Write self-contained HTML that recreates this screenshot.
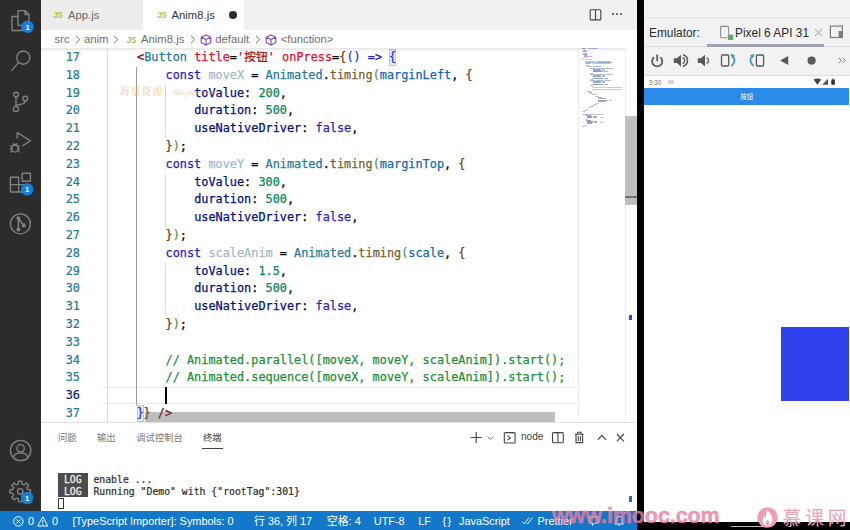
<!DOCTYPE html>
<html lang="zh">
<head>
<meta charset="utf-8">
<title>Anim8.js</title>
<style>
*{box-sizing:border-box;margin:0;padding:0}
html,body{width:850px;height:530px;overflow:hidden;background:#fff}
body{position:relative;font-family:"Liberation Sans","Noto Sans CJK SC",sans-serif;color:#333}
.abs{position:absolute}
#act{left:0;top:0;width:41px;height:511px;background:#2c2c2c}
#tabs{left:41px;top:0;width:596px;height:29.5px;background:#f1f1f1}
.tab{position:absolute;top:0;height:29.5px;font-size:11.3px;line-height:30px;color:#6a6a6a;white-space:nowrap}
.js{color:#b3bd3c;font-size:8.3px;font-weight:bold;letter-spacing:-0.4px;position:absolute;top:0}
#bc{left:41px;top:29.5px;width:596px;height:18.5px;background:#fff;font-size:11.3px;color:#6e6e6e;white-space:nowrap}
#bc span{position:absolute;top:-0.5px;line-height:20px}
.chev{position:absolute;top:5.8px;fill:none;stroke:#6e6e6e;stroke-width:1}
.cube{position:absolute;top:4px;fill:none;stroke:#7b4bc0;stroke-width:1.1;stroke-linejoin:round}
#ed{left:41px;top:48px;width:596px;height:374px;background:#fff;overflow:hidden}
.ln{position:absolute;-webkit-text-stroke:0.2px;left:0;width:39px;text-align:right;color:#237893;font:11.865px/17.8px "DejaVu Sans Mono","Liberation Mono",monospace}
.cl{position:absolute;white-space:pre;color:#000;-webkit-text-stroke:0.25px;font:11.865px/17.8px "DejaVu Sans Mono","Liberation Mono","Noto Sans CJK SC",monospace}
.k{color:#2a1cc8}.t{color:#2a7a92}.a{color:#dc1030}.s{color:#a31515}.f{color:#775f30}.v{color:#001080}.c{color:#1467b4}
.n{color:#098658}.m{color:#1f8c35}.p{color:#800000}.b1{color:#1a34e0}.b2{color:#4a9c4a}.b3{color:#7b3814}.u{color:#a3b8cc}
.bm{display:inline-block;height:17.6px;line-height:17.8px;vertical-align:top;background:#e3ebf5;box-shadow:inset 0 0 0 1px #c2c6cc;margin:0 -0.3px}
#mm i{position:absolute;display:block}
.cur{color:#0b216f}
.g{position:absolute;width:1px;background:#dcdcdc}
#panel{left:41px;top:422px;width:596px;height:89px;background:#fff;box-shadow:inset 0 1px 0 #e2e2e2}
.pt{position:absolute;top:8.6px;font-size:9.3px;color:#777;line-height:14px;white-space:nowrap}
.tm{position:absolute;left:17px;white-space:pre;color:#2c2c2c;-webkit-text-stroke:0.2px;font:9.8px/12.2px "DejaVu Sans Mono","Liberation Mono",monospace}
.log{color:#ececec;-webkit-text-stroke:0.3px}
#status{left:0;top:510.7px;width:637px;height:19.3px;background:#1378c9;color:#fff;font-size:10.9px;white-space:nowrap}
#status span{position:absolute;top:1.7px;line-height:19px}
#div{left:637px;top:0;width:7px;height:530px;background:#000}
#emu{left:644px;top:0;width:206px;height:530px;background:#fff}
.et{top:25px;font-size:11.9px;line-height:16px;color:#2b2b2b;white-space:nowrap}
</style>
</head>
<body>
<div id="act" class="abs">
<svg width="41" height="511" viewBox="0 0 41 511" fill="none" stroke="#828282" stroke-width="1.35" stroke-linecap="round" stroke-linejoin="round">
  <!-- files -->
  <path d="M18 10.6 H25 L29 14.6 V25.4 H18 Z M25 10.6 V14.6 H29"/>
  <path d="M17.5 16.5 H12 V30.5 H22.5 V26"/>
  <!-- search -->
  <circle cx="23.3" cy="57.6" r="6.6"/><path d="M18.4 62.6 L11.6 70.6"/>
  <!-- scm -->
  <circle cx="16.1" cy="94.6" r="2.4"/><circle cx="25.2" cy="98.6" r="2.4"/><circle cx="15.9" cy="108.9" r="2.6"/>
  <path d="M16 97.2 V106.2 M25.2 101.2 C25 104.5 21 104.5 16.2 105"/>
  <!-- debug -->
  <path d="M17.2 138 V132.6 L30.4 140.8 L23 145.6"/>
  <ellipse cx="14.9" cy="148.2" rx="3" ry="3.9"/><path d="M12.6 145.4 H17.2 M10.6 146 L12 147 M10.4 149 H11.8 M10.6 152 L12 151 M19.2 146 L17.8 147 M19.4 149 H18 M19.2 152 L17.8 151 M13.2 143.6 L14 144.6 M16.6 143.6 L15.8 144.6"/>
  <!-- extensions -->
  <path d="M10.4 177.2 H18.6 V192 H10.4 Z M10.4 184.6 H18.6 M18.6 184.6 H26 V192 H18.6"/>
  <rect x="22.2" y="173.2" width="8.2" height="8"/>
  <!-- gitlens -->
  <circle cx="20.4" cy="223.8" r="10"/>
  <path d="M18.4 218.6 V229.4 M18.6 218.8 L23.4 225.2" stroke-width="1.5"/>
  <circle cx="18.4" cy="218.2" r="1.3" fill="#868686"/><circle cx="18.4" cy="229.6" r="1.3" fill="#868686"/><circle cx="23.8" cy="225.4" r="1.4" fill="#868686"/>
  <!-- account -->
  <circle cx="20.6" cy="450.5" r="10.2"/><circle cx="20.6" cy="448.3" r="3.7"/>
  <path d="M13.4 457.3 C15 451.3 26.2 451.3 27.8 457.3"/>
  <!-- gear -->
  <path d="M30.45 489.61 L30.45 493.19 L27.59 493.17 L26.68 495.37 L28.71 497.38 L26.18 499.91 L24.17 497.88 L21.97 498.79 L21.99 501.65 L18.41 501.65 L18.43 498.79 L16.23 497.88 L14.22 499.91 L11.69 497.38 L13.72 495.37 L12.81 493.17 L9.95 493.19 L9.95 489.61 L12.81 489.63 L13.72 487.43 L11.69 485.42 L14.22 482.89 L16.23 484.92 L18.43 484.01 L18.41 481.15 L21.99 481.15 L21.97 484.01 L24.17 484.92 L26.18 482.89 L28.71 485.42 L26.68 487.43 L27.59 489.63 Z"/><circle cx="20.2" cy="491.4" r="2.7"/>
  <!-- badges -->
  <g stroke="none">
  <circle cx="27.6" cy="26.8" r="6.2" fill="#1581d6"/><circle cx="27.2" cy="189.4" r="6.2" fill="#1581d6"/><circle cx="27.2" cy="498" r="6.2" fill="#1581d6"/>
  </g>
  <g stroke="none" fill="#fff" style="font:bold 7.6px 'Liberation Sans',sans-serif" text-anchor="middle">
  <text x="27.5" y="29.6">1</text><text x="27.1" y="192.2">1</text><text x="27.1" y="500.8">1</text>
  </g>
</svg>
</div>
<div id="tabs" class="abs">
  <div class="tab" style="left:0;width:101.5px;background:#ececec"><span class="js" style="left:12px">JS</span><span style="position:absolute;left:27px">App.js</span></div>
  <div class="tab" style="left:101.5px;width:101px;background:#fff;color:#333"><span class="js" style="left:14.5px">JS</span><span style="position:absolute;left:29px">Anim8.js</span><span style="position:absolute;left:86.5px;top:11px;width:7.5px;height:7.5px;border-radius:50%;background:#2e2e2e"></span></div>
  <svg class="abs" style="left:548px;top:8px" width="14" height="14" viewBox="0 0 14 14"><rect x="1.2" y="1.7" width="10.6" height="10.2" rx="1" fill="none" stroke="#444" stroke-width="1.1"/><line x1="6.5" y1="1.7" x2="6.5" y2="12" stroke="#444" stroke-width="1.1"/></svg>
  <span class="abs" style="left:571px;top:13.4px;width:2px;height:2px;border-radius:50%;background:#444;box-shadow:4px 0 0 #444,8px 0 0 #444"></span>
</div>
<div id="bc" class="abs">
  <span style="left:13.5px">src</span><svg class="chev" style="left:33.5px" width="6" height="9" viewBox="0 0 6 9"><path d="M1 0.8 L4.8 4.5 L1 8.2"/></svg><span style="left:43px">anim</span><svg class="chev" style="left:71.5px" width="6" height="9" viewBox="0 0 6 9"><path d="M1 0.8 L4.8 4.5 L1 8.2"/></svg>
  <span class="js" style="left:85.5px;top:0px">JS</span><span style="left:100px">Anim8.js</span><svg class="chev" style="left:148.5px" width="6" height="9" viewBox="0 0 6 9"><path d="M1 0.8 L4.8 4.5 L1 8.2"/></svg>
  <svg class="cube" style="left:158.5px" width="12" height="12" viewBox="0 0 12 12"><path d="M6 0.9 L10.8 3.2 V8.6 L6 11.1 L1.2 8.6 V3.2 Z M1.2 3.2 L6 5.6 L10.8 3.2 M6 5.6 V11.1"/></svg>
  <span style="left:174.3px">default</span><svg class="chev" style="left:214px" width="6" height="9" viewBox="0 0 6 9"><path d="M1 0.8 L4.8 4.5 L1 8.2"/></svg>
  <svg class="cube" style="left:224px" width="12" height="12" viewBox="0 0 12 12"><path d="M6 0.9 L10.8 3.2 V8.6 L6 11.1 L1.2 8.6 V3.2 Z M1.2 3.2 L6 5.6 L10.8 3.2 M6 5.6 V11.1"/></svg>
  <span style="left:239.7px">&lt;function&gt;</span>
</div>
<div id="ed" class="abs">
<div class="abs" style="left:61.5px;top:338.50px;width:475.5px;height:17.40px;border-top:1px solid #ebebeb;border-bottom:1px solid #ebebeb"></div>
<div class="g" style="left:66.2px;top:0.90px;height:373.80px"></div>
<div class="g" style="left:94.9px;top:18.70px;height:338.20px;background:#9a9a9a"></div>
<div class="g" style="left:124.3px;top:36.50px;height:53.40px"></div>
<div class="g" style="left:124.3px;top:125.50px;height:53.40px"></div>
<div class="g" style="left:124.3px;top:214.50px;height:53.40px"></div>
<div class="ln" style="top:0.90px">17</div>
<div class="cl" style="left:96.00px;top:0.90px"><span class="p">&lt;</span><span class="t">Button</span> <span class="a">title</span>=<span class="s">'按钮'</span> <span class="a">onPress</span>=<span class="b3">{</span><span class="b1">()</span> <span class="k">=&gt;</span> <span class="b1 bm">{</span></div>
<div class="ln" style="top:18.70px">18</div>
<div class="cl" style="left:124.57px;top:18.70px"><span class="k">const</span> <span class="u">moveX</span> = <span class="t">Animated</span>.<span class="f">timing</span><span class="b2">(</span><span class="c">marginLeft</span>, <span class="b3">{</span></div>
<div class="ln" style="top:36.50px">19</div>
<div class="cl" style="left:153.14px;top:36.50px"><span class="v">toValue</span>: <span class="n">200</span>,</div>
<div class="ln" style="top:54.30px">20</div>
<div class="cl" style="left:153.14px;top:54.30px"><span class="v">duration</span>: <span class="n">500</span>,</div>
<div class="ln" style="top:72.10px">21</div>
<div class="cl" style="left:153.14px;top:72.10px"><span class="v">useNativeDriver</span>: <span class="k">false</span>,</div>
<div class="ln" style="top:89.90px">22</div>
<div class="cl" style="left:124.57px;top:89.90px"><span class="b3">}</span><span class="b2">)</span>;</div>
<div class="ln" style="top:107.70px">23</div>
<div class="cl" style="left:124.57px;top:107.70px"><span class="k">const</span> <span class="u">moveY</span> = <span class="t">Animated</span>.<span class="f">timing</span><span class="b2">(</span><span class="c">marginTop</span>, <span class="b3">{</span></div>
<div class="ln" style="top:125.50px">24</div>
<div class="cl" style="left:153.14px;top:125.50px"><span class="v">toValue</span>: <span class="n">300</span>,</div>
<div class="ln" style="top:143.30px">25</div>
<div class="cl" style="left:153.14px;top:143.30px"><span class="v">duration</span>: <span class="n">500</span>,</div>
<div class="ln" style="top:161.10px">26</div>
<div class="cl" style="left:153.14px;top:161.10px"><span class="v">useNativeDriver</span>: <span class="k">false</span>,</div>
<div class="ln" style="top:178.90px">27</div>
<div class="cl" style="left:124.57px;top:178.90px"><span class="b3">}</span><span class="b2">)</span>;</div>
<div class="ln" style="top:196.70px">28</div>
<div class="cl" style="left:124.57px;top:196.70px"><span class="k">const</span> <span class="u">scaleAnim</span> = <span class="t">Animated</span>.<span class="f">timing</span><span class="b2">(</span><span class="c">scale</span>, <span class="b3">{</span></div>
<div class="ln" style="top:214.50px">29</div>
<div class="cl" style="left:153.14px;top:214.50px"><span class="v">toValue</span>: <span class="n">1.5</span>,</div>
<div class="ln" style="top:232.30px">30</div>
<div class="cl" style="left:153.14px;top:232.30px"><span class="v">duration</span>: <span class="n">500</span>,</div>
<div class="ln" style="top:250.10px">31</div>
<div class="cl" style="left:153.14px;top:250.10px"><span class="v">useNativeDriver</span>: <span class="k">false</span>,</div>
<div class="ln" style="top:267.90px">32</div>
<div class="cl" style="left:124.57px;top:267.90px"><span class="b3">}</span><span class="b2">)</span>;</div>
<div class="ln" style="top:285.70px">33</div>
<div class="ln" style="top:303.50px">34</div>
<div class="cl" style="left:124.57px;top:303.50px"><span class="m">// Animated.parallel([moveX, moveY, scaleAnim]).start();</span></div>
<div class="ln" style="top:321.30px">35</div>
<div class="cl" style="left:124.57px;top:321.30px"><span class="m">// Animated.sequence([moveX, moveY, scaleAnim]).start();</span></div>
<div class="ln cur" style="top:339.10px">36</div>
<div class="ln" style="top:356.90px">37</div>
<div class="cl" style="left:96.00px;top:356.90px"><span class="b1 bm">}</span><span class="b3">}</span> <span class="p">/&gt;</span></div>
<div class="abs" style="left:124px;top:338.50px;width:1.9px;height:17.4px;background:#000"></div>
<div class="abs" style="left:104px;top:364.3px;width:410px;height:10px;background:rgba(100,100,100,.42)"></div>
<div class="abs" style="left:537px;top:0;width:1px;height:374px;background:#f0f0f0"></div>
<div class="abs" style="left:584px;top:0;width:1px;height:374px;background:#ececec"></div>
<div class="abs" style="left:584px;top:68px;width:12px;height:89px;background:#bfbfbf"></div>
<div class="abs" style="left:584px;top:148.2px;width:12px;height:1.8px;background:#6f6f6f"></div>
<div class="abs" style="left:588px;top:267px;width:3px;height:4.5px;background:#3547c9"></div>
<div id="mm"><i style="left:540.5px;top:0.4px;width:4.0px;height:1.0px;background:#6a5acd;opacity:0.62"></i><i style="left:546.5px;top:0.4px;width:10.0px;height:1.0px;background:#7f8fd0;opacity:0.62"></i><i style="left:541.5px;top:2.0px;width:3.0px;height:1.0px;background:#7b68c8;opacity:0.62"></i><i style="left:541.5px;top:3.3px;width:4.0px;height:1.0px;background:#7b68c8;opacity:0.62"></i><i style="left:541.5px;top:4.5px;width:4.0px;height:1.0px;background:#8a6fd0;opacity:0.62"></i><i style="left:541.5px;top:5.7px;width:5.0px;height:1.0px;background:#7b68c8;opacity:0.62"></i><i style="left:542.5px;top:7.0px;width:3.0px;height:1.0px;background:#7b68c8;opacity:0.62"></i><i style="left:542.5px;top:8.2px;width:8.0px;height:1.0px;background:#c07bb0;opacity:0.62"></i><i style="left:541.5px;top:9.4px;width:5.0px;height:1.0px;background:#c9a0c0;opacity:0.62"></i><i style="left:540.5px;top:10.7px;width:10.0px;height:1.0px;background:#c9a0c0;opacity:0.62"></i><i style="left:543.5px;top:12.7px;width:12.0px;height:1.0px;background:#8aa0d8;opacity:0.62"></i><i style="left:556.5px;top:12.7px;width:12.0px;height:1.0px;background:#5f86c8;opacity:0.62"></i><i style="left:543.5px;top:13.9px;width:10.0px;height:1.0px;background:#6f8fd0;opacity:0.62"></i><i style="left:554.5px;top:13.9px;width:16.0px;height:1.0px;background:#5f7fc0;opacity:0.62"></i><i style="left:543.5px;top:15.2px;width:6.0px;height:1.0px;background:#6f8fd0;opacity:0.62"></i><i style="left:551.5px;top:15.2px;width:18.0px;height:1.0px;background:#7f9fd0;opacity:0.62"></i><i style="left:543.5px;top:17.2px;width:4.0px;height:1.0px;background:#9aa8c8;opacity:0.62"></i><i style="left:545.5px;top:18.4px;width:5.0px;height:1.0px;background:#c08080;opacity:0.62"></i><i style="left:551.5px;top:18.4px;width:8.0px;height:1.0px;background:#6f8fc0;opacity:0.62"></i><i style="left:548.5px;top:19.7px;width:5.0px;height:1.0px;background:#7080d0;opacity:0.62"></i><i style="left:554.5px;top:19.7px;width:8.0px;height:1.0px;background:#70a0a8;opacity:0.62"></i><i style="left:563.5px;top:19.7px;width:8.0px;height:1.0px;background:#8090b8;opacity:0.62"></i><i style="left:551.5px;top:20.9px;width:8.0px;height:1.0px;background:#5868b0;opacity:0.62"></i><i style="left:560.5px;top:20.9px;width:3.0px;height:1.0px;background:#70a880;opacity:0.62"></i><i style="left:551.5px;top:22.1px;width:8.0px;height:1.0px;background:#5868b0;opacity:0.62"></i><i style="left:560.5px;top:22.1px;width:3.0px;height:1.0px;background:#70a880;opacity:0.62"></i><i style="left:551.5px;top:23.4px;width:10.0px;height:1.0px;background:#4858a8;opacity:0.62"></i><i style="left:562.5px;top:23.4px;width:4.0px;height:1.0px;background:#6878d8;opacity:0.62"></i><i style="left:548.5px;top:24.6px;width:3.0px;height:1.0px;background:#a09080;opacity:0.62"></i><i style="left:548.5px;top:25.8px;width:5.0px;height:1.0px;background:#7080d0;opacity:0.62"></i><i style="left:554.5px;top:25.8px;width:8.0px;height:1.0px;background:#70a0a8;opacity:0.62"></i><i style="left:563.5px;top:25.8px;width:8.0px;height:1.0px;background:#8090b8;opacity:0.62"></i><i style="left:551.5px;top:27.0px;width:8.0px;height:1.0px;background:#5868b0;opacity:0.62"></i><i style="left:560.5px;top:27.0px;width:3.0px;height:1.0px;background:#70a880;opacity:0.62"></i><i style="left:551.5px;top:28.3px;width:8.0px;height:1.0px;background:#5868b0;opacity:0.62"></i><i style="left:560.5px;top:28.3px;width:3.0px;height:1.0px;background:#70a880;opacity:0.62"></i><i style="left:551.5px;top:29.5px;width:10.0px;height:1.0px;background:#4858a8;opacity:0.62"></i><i style="left:562.5px;top:29.5px;width:4.0px;height:1.0px;background:#6878d8;opacity:0.62"></i><i style="left:548.5px;top:30.7px;width:3.0px;height:1.0px;background:#a09080;opacity:0.62"></i><i style="left:548.5px;top:32.0px;width:5.0px;height:1.0px;background:#7080d0;opacity:0.62"></i><i style="left:554.5px;top:32.0px;width:8.0px;height:1.0px;background:#70a0a8;opacity:0.62"></i><i style="left:563.5px;top:32.0px;width:6.0px;height:1.0px;background:#8090b8;opacity:0.62"></i><i style="left:551.5px;top:33.2px;width:8.0px;height:1.0px;background:#5868b0;opacity:0.62"></i><i style="left:560.5px;top:33.2px;width:3.0px;height:1.0px;background:#70a880;opacity:0.62"></i><i style="left:551.5px;top:34.4px;width:8.0px;height:1.0px;background:#5868b0;opacity:0.62"></i><i style="left:560.5px;top:34.4px;width:3.0px;height:1.0px;background:#70a880;opacity:0.62"></i><i style="left:551.5px;top:35.7px;width:10.0px;height:1.0px;background:#4858a8;opacity:0.62"></i><i style="left:562.5px;top:35.7px;width:4.0px;height:1.0px;background:#6878d8;opacity:0.62"></i><i style="left:548.5px;top:36.9px;width:3.0px;height:1.0px;background:#a09080;opacity:0.62"></i><i style="left:550.5px;top:39.3px;width:30.0px;height:1.0px;background:#7cc88a;opacity:0.62"></i><i style="left:550.5px;top:40.6px;width:30.0px;height:1.0px;background:#7cc88a;opacity:0.62"></i><i style="left:545.5px;top:42.6px;width:4.0px;height:1.0px;background:#9090b0;opacity:0.62"></i><i style="left:547.5px;top:43.9px;width:3.0px;height:1.0px;background:#b09090;opacity:0.62"></i><i style="left:548.5px;top:45.1px;width:3.0px;height:1.0px;background:#9090a8;opacity:0.62"></i><i style="left:550.5px;top:46.3px;width:5.0px;height:1.0px;background:#9098b8;opacity:0.62"></i><i style="left:553.5px;top:47.5px;width:4.0px;height:1.0px;background:#9098c8;opacity:0.62"></i><i style="left:556.5px;top:49.2px;width:4.0px;height:1.0px;background:#7080b8;opacity:0.62"></i><i style="left:556.5px;top:50.4px;width:8.0px;height:1.0px;background:#6878b0;opacity:0.62"></i><i style="left:556.5px;top:51.6px;width:10.0px;height:1.0px;background:#5868a8;opacity:0.62"></i><i style="left:567.5px;top:51.6px;width:3.0px;height:1.0px;background:#c08888;opacity:0.62"></i><i style="left:556.5px;top:52.9px;width:8.0px;height:1.0px;background:#6878b0;opacity:0.62"></i><i style="left:554.5px;top:54.5px;width:3.0px;height:1.0px;background:#a0a0a8;opacity:0.62"></i><i style="left:552.5px;top:55.7px;width:3.0px;height:1.0px;background:#b09898;opacity:0.62"></i><i style="left:550.5px;top:57.0px;width:3.0px;height:1.0px;background:#a8a0a0;opacity:0.62"></i><i style="left:548.5px;top:58.2px;width:3.0px;height:1.0px;background:#b0a0a0;opacity:0.62"></i><i style="left:546.5px;top:59.4px;width:3.0px;height:1.0px;background:#a8a0a8;opacity:0.62"></i><i style="left:544.5px;top:60.7px;width:3.0px;height:1.0px;background:#b0a8a8;opacity:0.62"></i><i style="left:542.5px;top:61.9px;width:3.0px;height:1.0px;background:#b8a8a8;opacity:0.62"></i><i style="left:540.5px;top:63.1px;width:3.0px;height:1.0px;background:#b0a8b0;opacity:0.62"></i><i style="left:541.5px;top:65.6px;width:5.0px;height:1.0px;background:#6070c0;opacity:0.62"></i><i style="left:547.5px;top:65.6px;width:4.0px;height:1.0px;background:#8090c8;opacity:0.62"></i><i style="left:552.5px;top:65.6px;width:10.0px;height:1.0px;background:#9098b0;opacity:0.62"></i><i style="left:544.5px;top:66.8px;width:5.0px;height:1.0px;background:#5868a8;opacity:0.62"></i><i style="left:545.5px;top:68.0px;width:5.0px;height:1.0px;background:#5060a8;opacity:0.62"></i><i style="left:551.5px;top:68.0px;width:4.0px;height:1.0px;background:#6878b0;opacity:0.62"></i><i style="left:545.5px;top:69.3px;width:5.0px;height:1.0px;background:#5060a8;opacity:0.62"></i><i style="left:551.5px;top:69.3px;width:4.0px;height:1.0px;background:#6878b0;opacity:0.62"></i><i style="left:558.5px;top:69.3px;width:3.0px;height:1.0px;background:#c08080;opacity:0.62"></i><i style="left:543.5px;top:70.5px;width:3.0px;height:1.0px;background:#a0a0b0;opacity:0.62"></i><i style="left:544.5px;top:71.7px;width:5.0px;height:1.0px;background:#5868a8;opacity:0.62"></i><i style="left:545.5px;top:73.0px;width:6.0px;height:1.0px;background:#5060a8;opacity:0.62"></i><i style="left:552.5px;top:73.0px;width:3.0px;height:1.0px;background:#6878b0;opacity:0.62"></i><i style="left:545.5px;top:74.2px;width:6.0px;height:1.0px;background:#5060a8;opacity:0.62"></i><i style="left:552.5px;top:74.2px;width:3.0px;height:1.0px;background:#6878b0;opacity:0.62"></i><i style="left:558.5px;top:74.2px;width:3.0px;height:1.0px;background:#c08080;opacity:0.62"></i><i style="left:545.5px;top:75.4px;width:5.0px;height:1.0px;background:#6070b0;opacity:0.62"></i><i style="left:542.5px;top:76.7px;width:2.0px;height:1.0px;background:#a0a0b0;opacity:0.62"></i><i style="left:540.5px;top:78.3px;width:2.0px;height:1.0px;background:#b0a0a0;opacity:0.62"></i></div>
<div class="abs" style="left:0;top:0;width:584px;height:4px;background:linear-gradient(rgba(0,0,0,.10),rgba(0,0,0,0))"></div>
</div>
<div id="panel" class="abs">
  <span class="pt" style="left:17px">问题</span><span class="pt" style="left:56px">输出</span><span class="pt" style="left:95.3px">调试控制台</span><span class="pt" style="left:162px;color:#424242">终端</span>
  <div class="abs" style="left:161px;top:26px;width:21px;height:1px;background:#424242"></div>
  <svg class="abs" style="left:425px;top:8px" width="165" height="16" viewBox="466 430 165 16" fill="none" stroke="#424242" stroke-width="1.1">
    <path d="M470.6 437.5 H481.8 M476.2 431.9 V443.1"/>
    <path d="M487.6 436.6 L490.5 439.4 L493.4 436.6" stroke="#6a6a6a" stroke-width=".9"/>
    <rect x="504.3" y="432.6" width="10.8" height="10.4" rx="1"/><path d="M507.6 435.6 L510.4 437.9 L507.6 440.2"/>
    <rect x="552.5" y="432.6" width="10.8" height="10.2" rx="1"/><path d="M557.9 432.6 V442.8"/>
    <path d="M575 434.2 H583.6 M577.6 434 V432.2 H581 V434 M576 434.4 V442.6 H582.6 V434.4 M578.2 436.2 V441 M580.4 436.2 V441"/>
    <path d="M597.8 439.8 L601.9 435.4 L606 439.8"/>
    <path d="M616.9 434 L623.9 441.4 M623.9 434 L616.9 441.4"/>
  </svg>
  <span class="abs" style="left:480px;top:8.4px;font-size:10.1px;line-height:14px;color:#424242">node</span>
  <div class="abs" style="left:587.5px;top:73.5px;width:3px;height:6px;background:#2f6fb5"></div>
  <div class="abs" style="left:17px;top:51.2px;width:29.5px;height:24.2px;background:#4c4c4c"></div>
  <div class="tm" style="top:51.9px"><span class="log"> LOG </span> enable ...</div>
  <div class="tm" style="top:63.8px"><span class="log"> LOG </span> Running "Demo" with {"rootTag":301}</div>
  <div class="abs" style="left:17px;top:75.6px;width:6px;height:11px;border:1px solid #333"></div>
</div>
<div id="status" class="abs">
  <svg class="abs" style="left:12px;top:4px" width="40" height="13" viewBox="12 515 40 13" fill="none" stroke="#fff" stroke-width="1"><circle cx="18.4" cy="521.4" r="4.7"/><path d="M16.3 519.3 L20.5 523.5 M20.5 519.3 L16.3 523.5"/><path d="M42.8 516.8 L47.8 526 H37.8 Z" stroke-linejoin="round"/><path d="M42.8 520 V523.2 M42.8 524 V525" stroke-width=".9"/></svg>
  <span style="left:28px">0</span><span style="left:52px">0</span>
  <span style="left:72.5px">[TypeScript Importer]: Symbols: 0</span>
  <span style="left:254px">行 36, 列 17</span>
  <span style="left:326.8px">空格: 4</span>
  <span style="left:373.8px">UTF-8</span>
  <span style="left:418.2px">LF</span>
  <span style="left:442.4px;letter-spacing:1.5px">{}</span><span style="left:459px">JavaScript</span>
  <svg class="abs" style="left:521px;top:5px" width="13" height="10" viewBox="0 0 13 10" fill="none" stroke="#fff" stroke-width=".9"><path d="M1.4 5.6 L3.4 8 L8 1.6 M5.6 7 L6.6 8 L11.4 1.6"/></svg>
  <span style="left:537.5px">Prettier</span>
  <svg class="abs" style="left:588px;top:4px" width="40" height="12" viewBox="588 515 40 12" fill="none" stroke="#fff" stroke-width=".9"><path d="M589.6 517 H598.4 V523 H594.8 L592.4 525.4 V523 H589.6 Z"/><path d="M615 524 H623.4 L622.2 522.4 V519.4 A3 3 0 0 0 616.2 519.4 V522.4 Z M618.4 525.4 H620"/></svg>
</div>
<div id="div" class="abs"></div>
<div id="emu" class="abs">
  <div class="abs" style="left:0;top:0;width:206px;height:75.5px;background:#f2f2f2"></div>
  <div class="abs" style="left:0;top:17px;width:206px;height:1px;background:#e4e4e4"></div>
  <div class="abs" style="left:0;top:46px;width:206px;height:1px;background:#dcdcdc"></div>
  <div class="abs" style="left:0;top:75px;width:206px;height:1px;background:#dedede"></div>
  <span class="abs et" style="left:5px">Emulator:</span>
  <svg class="abs" style="left:75px;top:24px" width="16" height="18" viewBox="0 0 16 18"><rect x="1.6" y="2.4" width="8" height="11.4" rx="1.2" fill="none" stroke="#8f8f8f" stroke-width="1.1"/><rect x="8.6" y="10.4" width="5.4" height="5.4" fill="#f2f2f2"/><rect x="9.3" y="11" width="4.6" height="4.6" fill="#3fbf4a" stroke="#7a8a7a" stroke-width=".7"/></svg>
  <span class="abs et" style="left:91px">Pixel 6 API 31</span>
  <svg class="abs" style="left:170px;top:28px" width="9" height="9" viewBox="0 0 9 9"><path d="M1 1 L8 8 M8 1 L1 8" stroke="#b9b9b9" stroke-width="1.1" fill="none"/></svg>
  <svg class="abs" style="left:185px;top:25px" width="15" height="14" viewBox="0 0 15 14"><rect x="1.4" y="1.1" width="12" height="11.4" fill="none" stroke="#7c7c7c" stroke-width="1.2"/><rect x="9.6" y="6" width="3.8" height="6.5" fill="#7c7c7c"/></svg>
  <div class="abs" style="left:63px;top:44px;width:116.5px;height:2.6px;background:#9da1b0"></div>
  <svg class="abs" style="left:0;top:50px" width="206" height="22" viewBox="644 50 206 22">
    <g fill="none" stroke="#595959" stroke-width="1.7" stroke-linecap="round">
      <path d="M653.6 57.6 A5.1 5.1 0 1 0 660.8 57.6"/><path d="M657.2 55.2 V60.6"/>
    </g>
    <g fill="#595959">
      <path d="M673.8 58.2 H677 L681 54.8 V66.4 L677 63 H673.8 Z"/>
      <path d="M697.8 58.2 H701 L705 54.8 V66.4 L701 63 H697.8 Z"/>
      <path d="M780 60.5 L788.2 56 V65 Z"/>
      <circle cx="811.6" cy="60.6" r="4.1"/>
    </g>
    <g fill="none" stroke="#595959" stroke-width="1.3">
      <path d="M682.6 57.6 A3.2 3.2 0 0 1 682.6 63.6"/><path d="M683 54.8 A6 6 0 0 1 683 66.4" stroke-width="1.5"/>
      <path d="M706.6 57.8 A3 3 0 0 1 706.6 63.4"/>
      <rect x="721.5" y="55" width="7.2" height="11" rx="1"/>
      <rect x="756.4" y="55" width="7.2" height="11" rx="1"/>
    </g>
    <g fill="none" stroke="#3a9dbd" stroke-width="1.7">
      <path d="M731.6 55.6 C735.6 58 735.6 63 731.2 66"/><path d="M730.6 54.6 L734 55.4 L732.4 58" stroke-width="1.2" fill="#3a9dbd"/>
      <path d="M753.4 55.6 C749.4 58 749.4 63 753.8 66"/><path d="M754.4 54.6 L751 55.4 L752.6 58" stroke-width="1.2" fill="#3a9dbd"/>
    </g>
    <path d="M838.8 57.8 L841.4 60.5 L838.8 63.2 M842.6 57.8 L845.2 60.5 L842.6 63.2" fill="none" stroke="#7a7a7a" stroke-width="1"/>
  </svg>
  <!-- phone -->
  <span class="abs" style="left:4.5px;top:77.5px;font-size:6.6px;line-height:9px;color:#80756c">3:30</span>
  <div class="abs" style="left:24px;top:80px;width:6px;height:4px;background:#d4d4d4;border-radius:1px"></div>
  <svg class="abs" style="left:168px;top:77px" width="26" height="10" viewBox="812 77 26 10"><path d="M813.6 79.6 Q817.4 77.6 821.2 79.6 L817.4 84.8 Z" fill="#444"/><path d="M828 78.8 V84.8 H822.2 Z" fill="#555"/><rect x="831.3" y="79.4" width="3.6" height="5.4" rx=".6" fill="#333"/><rect x="832.3" y="78.6" width="1.6" height="1" fill="#333"/></svg>
  <div class="abs" style="left:0;top:88px;width:205px;height:17px;background:#2a8ce8"></div>
  <span class="abs" style="left:96.3px;top:92px;font-size:6.4px;line-height:9px;color:#fff;white-space:nowrap">按钮</span>
  <div class="abs" style="left:137px;top:326.5px;width:68px;height:74px;background:#3041ee"></div>
  <div class="abs" style="left:0;top:521.5px;width:206px;height:9px;background:#000"></div>
  <div class="abs" style="left:87px;top:525.5px;width:40px;height:1.4px;background:#bdbdbd;border-radius:1px"></div>
</div>
<div class="abs" style="left:552px;top:501.8px;font:bold 21.5px/28px 'Liberation Sans',sans-serif;letter-spacing:-0.1px;color:rgba(233,125,158,.8);white-space:nowrap;-webkit-text-stroke:0.5px">www.imooc.com</div>
<svg class="abs" style="left:757.4px;top:506.5px" width="21" height="21" viewBox="0 0 21 21"><circle cx="10.5" cy="10.5" r="10.3" fill="#eaa0b2"/><path d="M10.6 2.8 C12.2 6 15.6 8.2 15.4 12.6 C15.3 16.4 13 18.8 10.4 18.8 C7.4 18.8 5.6 16.4 5.6 13.4 C5.6 11.2 6.8 9.8 7.6 8.4 C8.2 9.6 8.4 10.4 9 10.8 C8.8 7.6 9.6 5 10.6 2.8 Z" fill="#fff"/><path d="M10.6 12.4 C11.6 14 12.6 14.8 12.4 16.4 C12.2 17.8 11.4 18.6 10.4 18.6 C9.2 18.6 8.4 17.6 8.5 16.2 C8.6 14.8 10 14.2 10.6 12.4 Z" fill="#eaa0b2"/></svg>
<div class="abs" style="left:782.6px;top:504.6px;font:400 18.8px/24px 'Noto Sans CJK SC','Liberation Sans',sans-serif;letter-spacing:3.8px;color:#eaa3b5;white-space:nowrap">慕课网</div>
<div class="abs" style="left:120px;top:83.5px;font:9.8px/14px 'Noto Serif CJK SC','Liberation Serif',serif;color:rgba(235,175,75,.7);white-space:nowrap;letter-spacing:1px">海量资源<span style="letter-spacing:0">：</span><span style="font-size:7px;letter-spacing:0;margin-left:0">666java.com</span></div>
</body>
</html>
